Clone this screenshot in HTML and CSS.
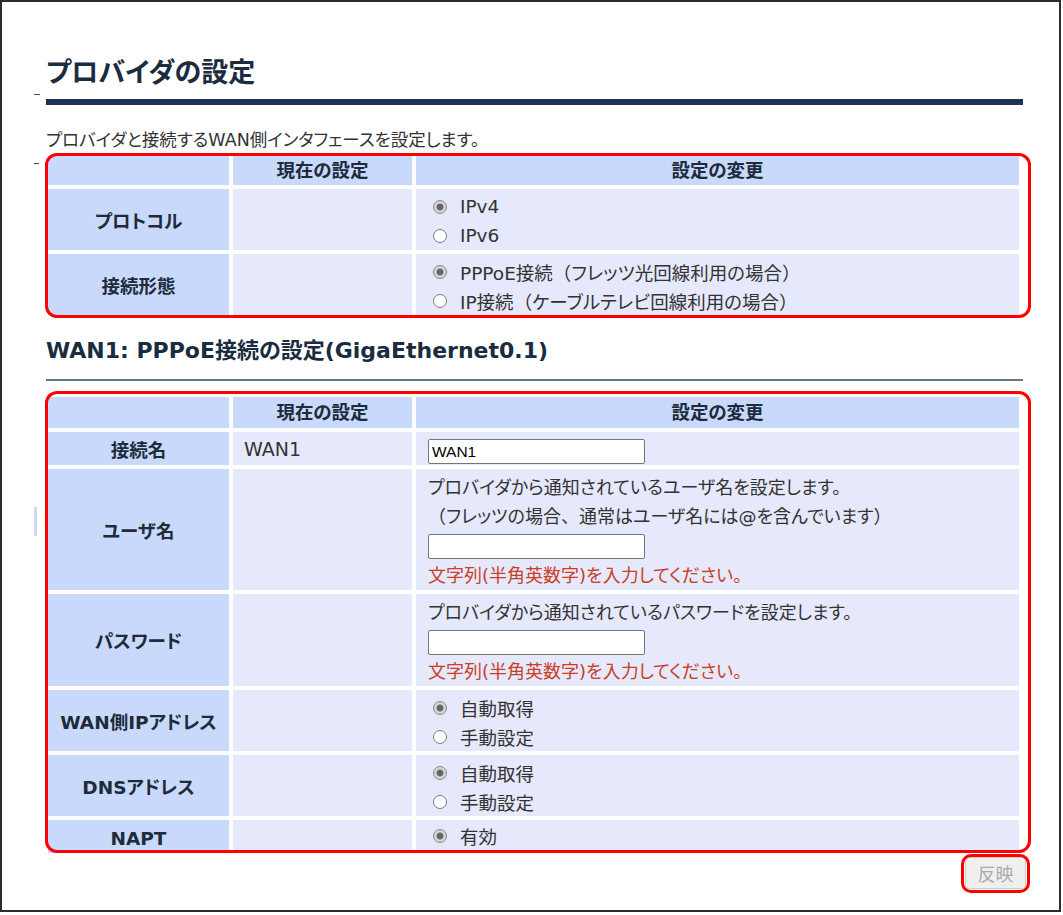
FILE: index.html
```html
<!DOCTYPE html>
<html lang="ja">
<head>
<meta charset="utf-8">
<title>プロバイダの設定</title>
<link rel="stylesheet" href="styles.css">
</head>
<body>
<div class="frame">
  <span class="mark mark-a"></span>
  <span class="mark mark-b"></span>
  <span class="mark mark-c"></span>
  <main class="page">
    <h1 class="title">プロバイダの設定</h1>
    <p class="desc">プロバイダと接続するWAN側インタフェースを設定します。</p>

    <div class="annot-wrap t1-wrap">
      <table class="cfg t1">
        <colgroup><col class="c-label"><col class="c-cur"><col class="c-edit"></colgroup>
        <thead>
          <tr><th></th><th>現在の設定</th><th>設定の変更</th></tr>
        </thead>
        <tbody>
          <tr>
            <th>プロトコル</th>
            <td class="cur"></td>
            <td class="edit">
              <label class="opt"><input type="radio" name="proto" checked><span>IPv4</span></label>
              <label class="opt"><input type="radio" name="proto"><span>IPv6</span></label>
            </td>
          </tr>
          <tr>
            <th>接続形態</th>
            <td class="cur"></td>
            <td class="edit">
              <label class="opt"><input type="radio" name="ctype" checked><span>PPPoE接続<span class="fw">（</span>フレッツ光回線利用の場合<span class="fw">）</span></span></label>
              <label class="opt"><input type="radio" name="ctype"><span>IP接続<span class="fw">（</span>ケーブルテレビ回線利用の場合<span class="fw">）</span></span></label>
            </td>
          </tr>
        </tbody>
      </table>
      <span class="annot annot-t1"></span>
    </div>

    <h2 class="section">WAN1: PPPoE接続の設定(GigaEthernet0.1)</h2>

    <div class="annot-wrap t2-wrap">
      <div class="clip">
        <table class="cfg t2">
          <colgroup><col class="c-label"><col class="c-cur"><col class="c-edit"></colgroup>
          <thead>
            <tr><th></th><th>現在の設定</th><th>設定の変更</th></tr>
          </thead>
          <tbody>
            <tr>
              <th>接続名</th>
              <td class="cur">WAN1</td>
              <td class="edit edit-name"><input class="text" type="text" value="WAN1"></td>
            </tr>
            <tr>
              <th>ユーザ名</th>
              <td class="cur"></td>
              <td class="edit edit-text">
                <div class="line">プロバイダから通知されているユーザ名を設定します。</div>
                <div class="line"><span class="fw">（</span>フレッツの場合<span class="fw">、</span>通常はユーザ名には@を含んでいます<span class="fw">）</span></div>
                <div class="field"><input class="text" type="text"></div>
                <div class="line hint">文字列(半角英数字)を入力してください。</div>
              </td>
            </tr>
            <tr>
              <th>パスワード</th>
              <td class="cur"></td>
              <td class="edit edit-text">
                <div class="line">プロバイダから通知されているパスワードを設定します。</div>
                <div class="field"><input class="text" type="password"></div>
                <div class="line hint">文字列(半角英数字)を入力してください。</div>
              </td>
            </tr>
            <tr>
              <th>WAN側IPアドレス</th>
              <td class="cur"></td>
              <td class="edit">
                <label class="opt"><input type="radio" name="wanip" checked><span>自動取得</span></label>
                <label class="opt"><input type="radio" name="wanip"><span>手動設定</span></label>
              </td>
            </tr>
            <tr>
              <th>DNSアドレス</th>
              <td class="cur"></td>
              <td class="edit">
                <label class="opt"><input type="radio" name="dns" checked><span>自動取得</span></label>
                <label class="opt"><input type="radio" name="dns"><span>手動設定</span></label>
              </td>
            </tr>
            <tr>
              <th>NAPT</th>
              <td class="cur"></td>
              <td class="edit edit-napt">
                <label class="opt"><input type="radio" name="napt" checked><span>有効</span></label>
              </td>
            </tr>
          </tbody>
        </table>
      </div>
      <span class="annot annot-t2"></span>
    </div>

    <div class="actions">
      <div class="btn-wrap">
        <button class="apply" type="button" disabled>反映</button>
        <span class="annot annot-btn"></span>
      </div>
    </div>
  </main>
</div>
</body>
</html>
```

FILE: styles.css
```css
* { box-sizing: border-box; }

html, body {
  margin: 0;
  padding: 0;
  background: #ffffff;
}

body {
  font-family: "DejaVu Sans", "Noto Sans CJK JP", sans-serif;
  font-feature-settings: "palt";
  color: #333333;
}

.fw { font-feature-settings: normal; }

.frame {
  position: relative;
  width: 1061px;
  height: 912px;
  border: 2px solid #2b2b2b;
  overflow: hidden;
}

.mark {
  position: absolute;
  display: block;
}
.mark-a { left: 32px; top: 92px; width: 6px; height: 1px; background: #4a4a4a; }
.mark-b { left: 32px; top: 161px; width: 5px; height: 1px; background: #4a4a4a; }
.mark-c { left: 32px; top: 505px; width: 3px; height: 29px; background: #cbd8f8; }

.page {
  width: 1021px;
  padding-left: 42px;
}

.title {
  margin: 53px 0 0 2px;
  padding: 0 0 8px;
  font-size: 27px;
  line-height: 36px;
  font-weight: bold;
  color: #1b2c40;
  border-bottom: 6px solid #1c3450;
}

.desc {
  margin: 25px 0 0 2px;
  font-size: 17.5px;
  line-height: 20px;
  color: #333333;
}

.annot-wrap { position: relative; }
.t1-wrap { margin-top: 2px; }
.t2-wrap { margin-top: 12px; }

.annot {
  position: absolute;
  display: block;
  border: 3px solid #ff0000;
  pointer-events: none;
}
.annot-t1 { left: 1px; top: 1px; width: 986px; height: 165px; border-radius: 12px; }
.annot-t2 { left: 1px; top: -2px; width: 986px; height: 462px; border-radius: 12px; }
.annot-btn { left: -4px; top: -3px; right: -4px; bottom: -4px; border-radius: 10px; }

.cfg {
  width: 979px;
  border-collapse: separate;
  border-spacing: 4px;
  table-layout: fixed;
}
.c-label { width: 181px; }
.c-cur { width: 179px; }
.c-edit { width: 603px; }

.cfg th, .cfg td { padding: 0; }

.cfg thead th {
  height: 29px;
  background: #c9d9fc;
  color: #1d2b3b;
  font-size: 18.5px;
  font-weight: bold;
  line-height: 22px;
  text-align: center;
  vertical-align: middle;
}
.t2 thead th { height: 31px; }

.cfg tbody th {
  background: #c9d9fc;
  color: #1d2b3b;
  font-size: 18.5px;
  font-weight: bold;
  text-align: center;
  vertical-align: middle;
}

.cfg td {
  background: #e6e8fc;
  font-size: 18.5px;
  color: #333333;
}

.cfg td.cur {
  padding: 0 11px;
  font-size: 19px;
  vertical-align: middle;
}

.cfg td.edit {
  padding: 3px 12px 0;
  vertical-align: top;
}
.cfg td.edit-text { padding-top: 4px; }
.cfg td.edit-name { padding: 7px 12px 1px; }
.cfg td.edit-napt { padding: 1px 12px 6px; }

.opt {
  display: flex;
  align-items: center;
  height: 29px;
  white-space: nowrap;
}
.opt input {
  appearance: none;
  -webkit-appearance: none;
  width: 14px;
  height: 14px;
  margin: 0 13px 0 5px;
  border: 1px solid #7a7a7a;
  border-radius: 50%;
  background: #ffffff;
  flex: none;
}
.opt input:checked {
  border-color: #8a8a8a;
  background: radial-gradient(circle, #666666 0 3.2px, #d4d4d4 3.8px);
}

.line {
  font-size: 18px;
  line-height: 29px;
  white-space: nowrap;
}
.hint { color: #c8401f; }

.field { margin: 3px 0 2px; }
.field .text { display: block; }

.text {
  width: 217px;
  height: 25px;
  margin: 0;
  padding: 0 3px;
  border: 1px solid #767676;
  border-radius: 2px;
  background: #ffffff;
  font-family: "Liberation Sans", Arial, sans-serif;
  font-size: 15.5px;
  color: #000000;
}

.section {
  margin: 17px 0 0 2px;
  padding: 0 0 13px;
  font-size: 22px;
  line-height: 30px;
  font-weight: bold;
  color: #1b2c40;
  border-bottom: 2px solid #687684;
}

.clip {
  height: 460px;
  overflow: hidden;
}

.actions {
  display: flex;
  justify-content: flex-end;
  margin-top: 4px;
  margin-right: -3px;
}
.btn-wrap { position: relative; }

.apply {
  display: block;
  width: 61px;
  height: 32px;
  padding: 0;
  border: 1px solid #cdcdcd;
  border-radius: 4px;
  background: #efefef;
  color: #ababab;
  font-family: "Noto Sans CJK JP", sans-serif;
  font-size: 18px;
  line-height: 30px;
}
```
